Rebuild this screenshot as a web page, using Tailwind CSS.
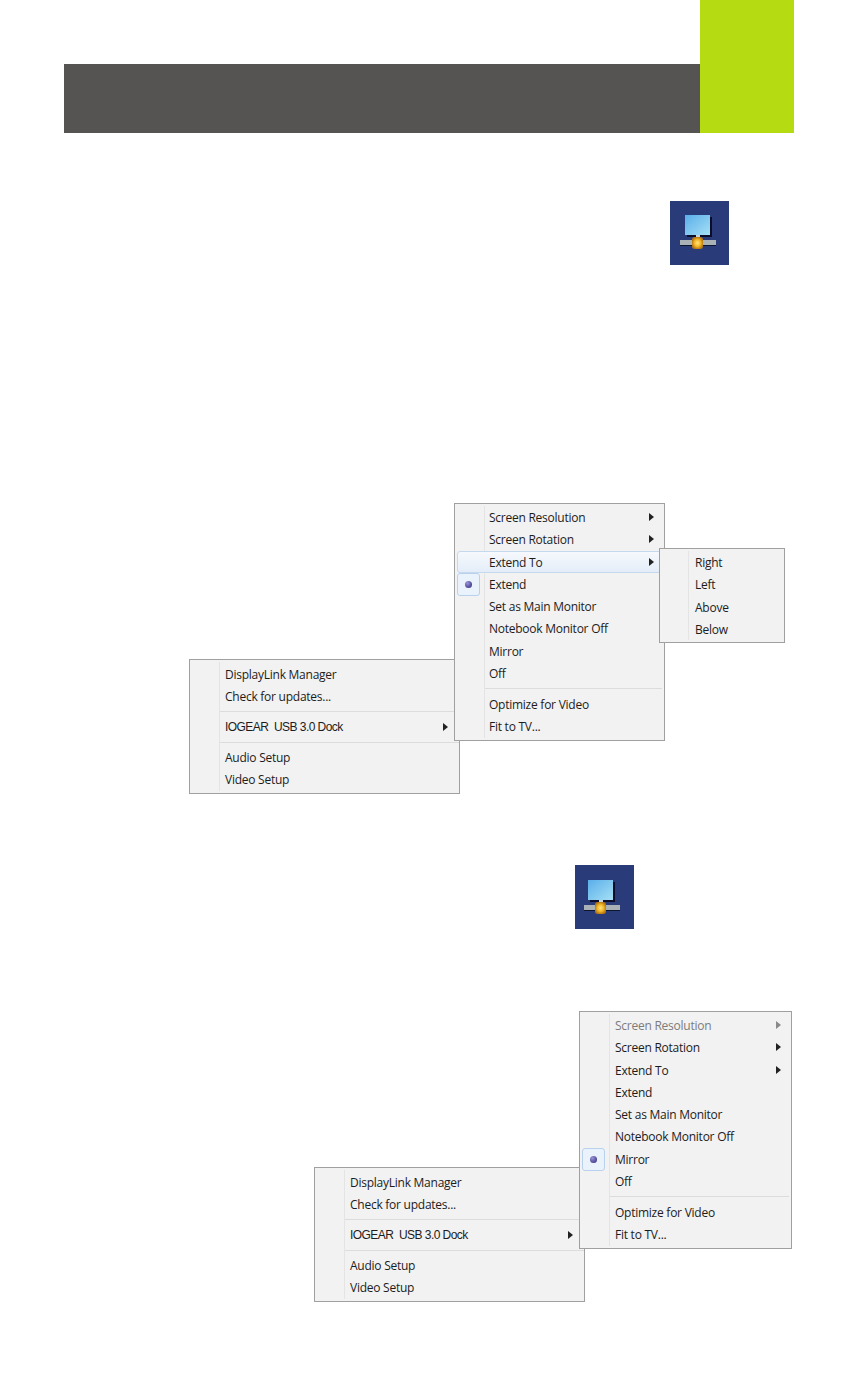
<!DOCTYPE html>
<html lang="en">
<head>
  <meta charset="UTF-8">
  <title>IOGEAR USB 3.0 Dock</title>
  <script src="https://cdn.jsdelivr.net/npm/@tailwindcss/browser@4"></script>
</head>
<body class="bg-white">
  <div class="w-[858px] h-[1386px] overflow-hidden font-['Open_Sans',sans-serif] text-[12px] tracking-[-0.25px] text-[#1c1c1c]">

    <!-- Header bar -->
    <header class="flex items-end h-[133px] ml-[64px] w-[730px]">
      <div class="flex-1 h-[69px] bg-[#565452]"></div>
      <div class="w-[94px] h-[133px] bg-[#b5dc12]"></div>
    </header>

    <!-- Tray icon -->
    <div class="mt-[68px] ml-[670px] w-[59px] h-[64px] bg-[#2a3b7a]">
      <svg width="59" height="64" viewBox="0 0 59 64">
        <defs>
          <linearGradient id="screen1" x1="0" y1="0" x2="1" y2="1"><stop offset="0" stop-color="#5aaeea"/><stop offset="1" stop-color="#a5e0f5"/></linearGradient>
          <radialGradient id="node1"><stop offset="0" stop-color="#ffe680"/><stop offset="0.6" stop-color="#f0b428"/><stop offset="1" stop-color="#b87a10"/></radialGradient>
          <filter id="soft"><feGaussianBlur stdDeviation="0.5"/></filter>
        </defs>
        <g filter="url(#soft)">
          <rect x="17" y="16" width="25" height="20" fill="#0a0f2a"/>
          <rect x="15" y="14" width="25" height="20" fill="url(#screen1)"/>
          <rect x="26" y="34" width="4" height="5" fill="#c9d3dc"/>
          <rect x="10" y="39" width="36" height="5" fill="#aab2b5"/>
          <rect x="10" y="44" width="36" height="1" fill="#10142e"/>
          <rect x="22" y="36" width="11" height="12" rx="3" fill="url(#node1)"/>
        </g>
      </svg>
    </div>

    <!-- First menu group -->
    <section class="relative mt-[238px] ml-[189px] w-[596px] h-[291px]">
      <div class="absolute left-0 top-[156px] w-[271px] h-[135px] bg-[#f2f2f2] border border-[#a0a0a0] py-[3px]">
        <div class="absolute left-[29px] top-[2px] bottom-[2px] w-px bg-[#e4e4e4]"></div>
        <div class="h-[22px] pt-[2px] pl-[35px] flex items-center">DisplayLink Manager</div>
        <div class="h-[22px] pt-[2px] pl-[35px] flex items-center">Check for updates...</div>
        <div class="h-[9px] ml-[30px] flex items-center"><div class="w-full h-px bg-[#dcdcdc]"></div></div>
        <div class="h-[22px] pl-[35px] pr-[11px] flex items-center justify-between font-['Liberation_Sans',sans-serif] tracking-[-0.55px]">
          <span>IOGEAR&nbsp; USB 3.0 Dock</span>
          <svg width="5" height="8" viewBox="0 0 5 8"><path d="M0 0 L5 4 L0 8 Z" fill="#222"/></svg>
        </div>
        <div class="h-[9px] ml-[30px] flex items-center"><div class="w-full h-px bg-[#dcdcdc]"></div></div>
        <div class="h-[22px] pl-[35px] flex items-center">Audio Setup</div>
        <div class="h-[22px] pl-[35px] flex items-center">Video Setup</div>
      </div>

      <div class="absolute left-[265px] top-0 w-[211px] h-[238px] bg-[#f2f2f2] border border-[#a0a0a0] py-[2px]">
        <div class="absolute left-[29px] top-[2px] bottom-[2px] w-px bg-[#e4e4e4]"></div>
        <div class="h-[22.25px] pt-[2px] pl-[34px] pr-[10px] flex items-center justify-between"><span>Screen Resolution</span><svg class="-mt-[2px]" width="5" height="8" viewBox="0 0 5 8"><path d="M0 0 L5 4 L0 8 Z" fill="#222"/></svg></div>
        <div class="h-[22.25px] pt-[2px] pl-[34px] pr-[10px] flex items-center justify-between"><span>Screen Rotation</span><svg class="-mt-[2px]" width="5" height="8" viewBox="0 0 5 8"><path d="M0 0 L5 4 L0 8 Z" fill="#222"/></svg></div>
        <div class="relative h-[22.25px] pt-[2px] pl-[34px] pr-[10px] flex items-center justify-between">
          <div class="absolute left-[2px] right-[1px] top-0 bottom-0 rounded-[3px] border border-[#c4d8ee] bg-gradient-to-b from-[#f6f9fd] to-[#e4edf8]"></div>
          <span class="relative">Extend To</span><svg class="relative -mt-[2px]" width="5" height="8" viewBox="0 0 5 8"><path d="M0 0 L5 4 L0 8 Z" fill="#222"/></svg>
        </div>
        <div class="relative h-[22.25px] pt-[2px] pl-[34px] flex items-center">
          <div class="absolute left-[2px] top-0 w-[23px] h-[23px] rounded-[3px] border border-[#b8d2ee] bg-[#eaf2fc] flex items-center justify-center">
            <div class="w-[7px] h-[7px] rounded-full bg-radial-[at_35%_30%] from-[#9a94d8] to-[#2a2478]"></div>
          </div>
          Extend
        </div>
        <div class="h-[22.25px] pt-[2px] pl-[34px] flex items-center">Set as Main Monitor</div>
        <div class="h-[22.25px] pt-[2px] pl-[34px] flex items-center">Notebook Monitor Off</div>
        <div class="h-[22.25px] pt-[2px] pl-[34px] flex items-center">Mirror</div>
        <div class="h-[22.25px] pt-[2px] pl-[34px] flex items-center">Off</div>
        <div class="h-[9px] ml-[30px] mr-[2px] flex items-center"><div class="w-full h-px bg-[#dcdcdc]"></div></div>
        <div class="h-[22.25px] pt-[2px] pl-[34px] flex items-center">Optimize for Video</div>
        <div class="h-[22.25px] pt-[2px] pl-[34px] flex items-center">Fit to TV...</div>
      </div>

      <div class="absolute left-[470px] top-[45px] w-[126px] h-[95px] bg-[#f2f2f2] border border-[#a0a0a0] py-[2px]">
        <div class="absolute left-[28px] top-[2px] bottom-[2px] w-px bg-[#e4e4e4]"></div>
        <div class="h-[22.25px] pt-[2px] pl-[35px] flex items-center">Right</div>
        <div class="h-[22.25px] pt-[2px] pl-[35px] flex items-center">Left</div>
        <div class="h-[22.25px] pt-[2px] pl-[35px] flex items-center">Above</div>
        <div class="h-[22.25px] pt-[2px] pl-[35px] flex items-center">Below</div>
      </div>
    </section>

    <!-- Tray icon -->
    <div class="mt-[71px] ml-[575px] w-[59px] h-[64px] bg-[#2a3b7a]">
      <svg width="59" height="64" viewBox="0 0 59 64">
        <g filter="url(#soft)">
          <rect x="15" y="17" width="25" height="20" fill="#0a0f2a"/>
          <rect x="13" y="15" width="25" height="20" fill="url(#screen1)"/>
          <rect x="24" y="35" width="4" height="5" fill="#c9d3dc"/>
          <rect x="9" y="40" width="36" height="5" fill="#aab2b5"/>
          <rect x="9" y="45" width="36" height="1" fill="#10142e"/>
          <rect x="20" y="37" width="11" height="12" rx="3" fill="url(#node1)"/>
        </g>
      </svg>
    </div>

    <!-- Second menu group -->
    <section class="relative mt-[82px] ml-[314px] w-[478px] h-[291px]">
      <div class="absolute left-0 top-[156px] w-[271px] h-[135px] bg-[#f2f2f2] border border-[#a0a0a0] py-[3px]">
        <div class="absolute left-[29px] top-[2px] bottom-[2px] w-px bg-[#e4e4e4]"></div>
        <div class="h-[22px] pt-[2px] pl-[35px] flex items-center">DisplayLink Manager</div>
        <div class="h-[22px] pt-[2px] pl-[35px] flex items-center">Check for updates...</div>
        <div class="h-[9px] ml-[30px] flex items-center"><div class="w-full h-px bg-[#dcdcdc]"></div></div>
        <div class="h-[22px] pl-[35px] pr-[11px] flex items-center justify-between font-['Liberation_Sans',sans-serif] tracking-[-0.55px]">
          <span>IOGEAR&nbsp; USB 3.0 Dock</span>
          <svg width="5" height="8" viewBox="0 0 5 8"><path d="M0 0 L5 4 L0 8 Z" fill="#222"/></svg>
        </div>
        <div class="h-[9px] ml-[30px] flex items-center"><div class="w-full h-px bg-[#dcdcdc]"></div></div>
        <div class="h-[22px] pl-[35px] flex items-center">Audio Setup</div>
        <div class="h-[22px] pl-[35px] flex items-center">Video Setup</div>
      </div>

      <div class="absolute left-[265px] top-0 w-[213px] h-[238px] bg-[#f2f2f2] border border-[#a0a0a0] py-[2px]">
        <div class="absolute left-[29px] top-[2px] bottom-[2px] w-px bg-[#e4e4e4]"></div>
        <div class="h-[22.25px] pt-[2px] pl-[35px] pr-[10px] flex items-center justify-between text-[#7c7c7c]"><span>Screen Resolution</span><svg class="-mt-[2px]" width="5" height="8" viewBox="0 0 5 8"><path d="M0 0 L5 4 L0 8 Z" fill="#8a8a8a"/></svg></div>
        <div class="h-[22.25px] pt-[2px] pl-[35px] pr-[10px] flex items-center justify-between"><span>Screen Rotation</span><svg class="-mt-[2px]" width="5" height="8" viewBox="0 0 5 8"><path d="M0 0 L5 4 L0 8 Z" fill="#222"/></svg></div>
        <div class="h-[22.25px] pt-[2px] pl-[35px] pr-[10px] flex items-center justify-between"><span>Extend To</span><svg class="-mt-[2px]" width="5" height="8" viewBox="0 0 5 8"><path d="M0 0 L5 4 L0 8 Z" fill="#222"/></svg></div>
        <div class="h-[22.25px] pt-[2px] pl-[35px] flex items-center">Extend</div>
        <div class="h-[22.25px] pt-[2px] pl-[35px] flex items-center">Set as Main Monitor</div>
        <div class="h-[22.25px] pt-[2px] pl-[35px] flex items-center">Notebook Monitor Off</div>
        <div class="relative h-[22.25px] pt-[2px] pl-[35px] flex items-center">
          <div class="absolute left-[2px] top-0 w-[23px] h-[23px] rounded-[3px] border border-[#b8d2ee] bg-[#eaf2fc] flex items-center justify-center">
            <div class="w-[7px] h-[7px] rounded-full bg-radial-[at_35%_30%] from-[#9a94d8] to-[#2a2478]"></div>
          </div>
          Mirror
        </div>
        <div class="h-[22.25px] pt-[2px] pl-[35px] flex items-center">Off</div>
        <div class="h-[9px] ml-[30px] mr-[2px] flex items-center"><div class="w-full h-px bg-[#dcdcdc]"></div></div>
        <div class="h-[22.25px] pt-[2px] pl-[35px] flex items-center">Optimize for Video</div>
        <div class="h-[22.25px] pt-[2px] pl-[35px] flex items-center">Fit to TV...</div>
      </div>
    </section>
  </div>
</body>
</html>
